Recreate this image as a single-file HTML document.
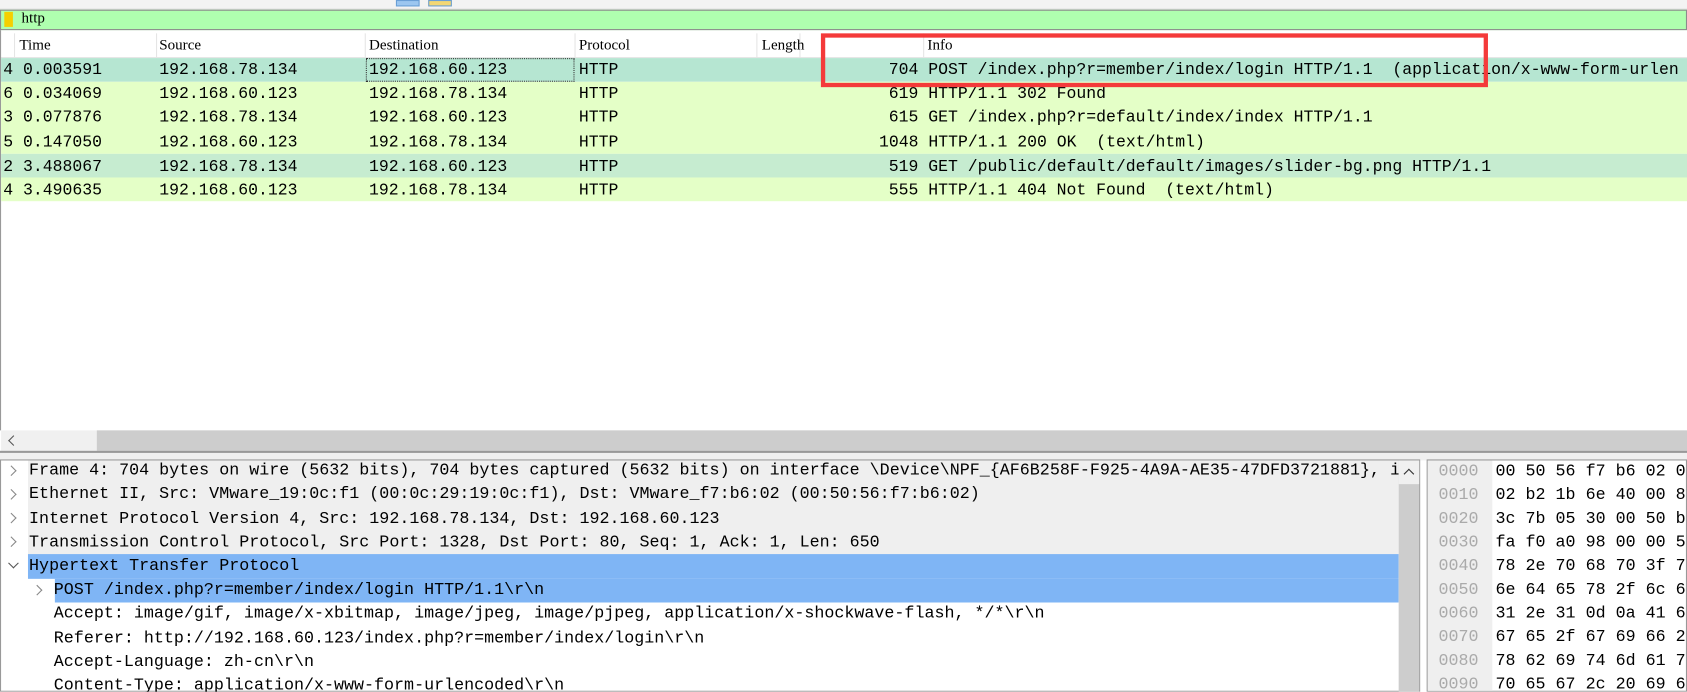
<!DOCTYPE html>
<html><head><meta charset="utf-8"><style>
*{margin:0;padding:0;box-sizing:border-box}
body{width:1687px;height:692px;overflow:hidden;background:#fff;font-family:"Liberation Mono",monospace;font-size:15.3px;color:#000;position:relative}
#w{position:absolute;left:0;top:0;width:1568px;height:643px;transform:scale(1.0759);transform-origin:0 0;overflow:hidden}
.abs{position:absolute}
.t{position:absolute;white-space:pre;line-height:22px}
.b{font-size:15.5px}
.hdr{font-family:"Liberation Serif","Noto Serif CJK SC",serif;font-size:14px}
.chev{position:absolute;width:7px;height:7px;border-right:1.5px solid #888;border-bottom:1.5px solid #888;transform:rotate(-45deg)}
</style></head><body><div id="w">
<div class="abs" style="left:0;top:0;width:1568px;height:9px;background:#f3f3f3;border-bottom:1px solid #ddd"></div>
<div class="abs" style="left:368px;top:0;width:22px;height:6px;background:#9cc6f0;border:1px solid #6a9fd6"></div>
<div class="abs" style="left:398px;top:0;width:22px;height:6px;background:#f2d774;border:1px solid #6a9fd6"></div>
<div class="abs" style="left:0;top:9px;width:1568px;height:19px;background:#afffaf;border:1px solid #8c8c8c"></div>
<div class="abs" style="left:4px;top:11px;width:8px;height:14px;background:#f5cf00"></div>
<div class="t hdr" style="left:20px;top:7px;font-size:14px">http</div>
<div class="abs" style="left:0;top:31px;width:1568px;height:23px;background:#fff;border-bottom:1px solid #e5e5e5"></div>
<div class="abs" style="left:0;top:28px;width:1px;height:372px;background:#999"></div>
<div class="abs" style="left:13px;top:31px;width:1px;height:23px;background:#e5e5e5"></div>
<div class="abs" style="left:145px;top:31px;width:1px;height:23px;background:#e5e5e5"></div>
<div class="abs" style="left:339px;top:31px;width:1px;height:23px;background:#e5e5e5"></div>
<div class="abs" style="left:534px;top:31px;width:1px;height:23px;background:#e5e5e5"></div>
<div class="abs" style="left:703px;top:31px;width:1px;height:23px;background:#e5e5e5"></div>
<div class="abs" style="left:743px;top:31px;width:1px;height:23px;background:#e5e5e5"></div>
<div class="abs" style="left:858px;top:31px;width:1px;height:23px;background:#e5e5e5"></div>
<div class="t hdr" style="left:18px;top:32px">Time</div>
<div class="t hdr" style="left:148px;top:32px">Source</div>
<div class="t hdr" style="left:343px;top:32px">Destination</div>
<div class="t hdr" style="left:538px;top:32px">Protocol</div>
<div class="t hdr" style="left:708px;top:32px">Length</div>
<div class="t hdr" style="left:862px;top:32px">Info</div>
<div class="abs" style="left:1px;top:54px;width:1567px;height:22px;background:#b6e6d2"></div>
<div class="abs" style="left:1px;top:76px;width:1567px;height:67px;background:#e4ffc7"></div>
<div class="abs" style="left:1px;top:143px;width:1567px;height:22px;background:#c6ecd0"></div>
<div class="abs" style="left:1px;top:165px;width:1567px;height:22px;background:#e4ffc7"></div>
<div class="abs" style="left:340px;top:54px;width:194px;height:22px;border:1px dotted #333"></div>
<div class="t" style="left:3px;top:54px">4 0.003591</div><div class="t" style="left:148px;top:54px">192.168.78.134</div><div class="t" style="left:343px;top:54px">192.168.60.123</div><div class="t" style="left:538px;top:54px">HTTP</div><div class="t" style="left:826px;top:54px">704 POST /index.php?r=member/index/login HTTP/1.1  (application/x-www-form-urlen</div>
<div class="t" style="left:3px;top:76px">6 0.034069</div><div class="t" style="left:148px;top:76px">192.168.60.123</div><div class="t" style="left:343px;top:76px">192.168.78.134</div><div class="t" style="left:538px;top:76px">HTTP</div><div class="t" style="left:826px;top:76px">619 HTTP/1.1 302 Found</div>
<div class="t" style="left:3px;top:98px">3 0.077876</div><div class="t" style="left:148px;top:98px">192.168.78.134</div><div class="t" style="left:343px;top:98px">192.168.60.123</div><div class="t" style="left:538px;top:98px">HTTP</div><div class="t" style="left:826px;top:98px">615 GET /index.php?r=default/index/index HTTP/1.1</div>
<div class="t" style="left:3px;top:121px">5 0.147050</div><div class="t" style="left:148px;top:121px">192.168.60.123</div><div class="t" style="left:343px;top:121px">192.168.78.134</div><div class="t" style="left:538px;top:121px">HTTP</div><div class="t" style="left:817px;top:121px">1048 HTTP/1.1 200 OK  (text/html)</div>
<div class="t" style="left:3px;top:144px">2 3.488067</div><div class="t" style="left:148px;top:144px">192.168.78.134</div><div class="t" style="left:343px;top:144px">192.168.60.123</div><div class="t" style="left:538px;top:144px">HTTP</div><div class="t" style="left:826px;top:144px">519 GET /public/default/default/images/slider-bg.png HTTP/1.1</div>
<div class="t" style="left:3px;top:166px">4 3.490635</div><div class="t" style="left:148px;top:166px">192.168.60.123</div><div class="t" style="left:343px;top:166px">192.168.78.134</div><div class="t" style="left:538px;top:166px">HTTP</div><div class="t" style="left:826px;top:166px">555 HTTP/1.1 404 Not Found  (text/html)</div>
<div class="abs" style="left:763px;top:31px;width:620px;height:50px;border:4px solid #f43a3a"></div>
<div class="abs" style="left:1px;top:400px;width:1567px;height:19px;background:#f0f0f0"></div>
<div class="abs" style="left:90px;top:400px;width:1478px;height:19px;background:#cdcdcd"></div>
<div class="chev" style="left:9px;top:406px;transform:rotate(135deg);border-color:#555"></div>
<div class="abs" style="left:0;top:419px;width:1568px;height:2px;background:#999"></div>
<div class="abs" style="left:0;top:421px;width:1568px;height:7px;background:#f0f0f0"></div>
<div class="abs" style="left:0;top:427px;width:1320px;height:216px;border:1px solid #999;background:#fff"></div>
<div class="abs" style="left:26px;top:428px;width:1274px;height:88px;background:#efefef"></div>
<div class="abs" style="left:26px;top:515px;width:1274px;height:23px;background:#7fb5f5"></div>
<div class="abs" style="left:51px;top:538px;width:1249px;height:22px;background:#7fb5f5"></div>
<div class="chev" style="left:7px;top:434px"></div>
<div class="chev" style="left:7px;top:456px"></div>
<div class="chev" style="left:7px;top:478px"></div>
<div class="chev" style="left:7px;top:500px"></div>
<div class="chev" style="left:9px;top:520px;transform:rotate(45deg);border-color:#555"></div>
<div class="chev" style="left:31px;top:545px"></div>
<div class="t b" style="left:27px;top:426px;line-height:22.3px">Frame 4: 704 bytes on wire (5632 bits), 704 bytes captured (5632 bits) on interface \Device\NPF_{AF6B258F-F925-4A9A-AE35-47DFD3721881}, i
Ethernet II, Src: VMware_19:0c:f1 (00:0c:29:19:0c:f1), Dst: VMware_f7:b6:02 (00:50:56:f7:b6:02)
Internet Protocol Version 4, Src: 192.168.78.134, Dst: 192.168.60.123
Transmission Control Protocol, Src Port: 1328, Dst Port: 80, Seq: 1, Ack: 1, Len: 650
Hypertext Transfer Protocol</div>
<div class="abs" style="left:1300px;top:428px;width:19px;height:215px;background:#cdcdcd"></div>
<div class="abs" style="left:1300px;top:428px;width:19px;height:22px;background:#f0f0f0"></div>
<div class="chev" style="left:1306px;top:437px;transform:rotate(-135deg);border-color:#333"></div>
<div class="t b" style="left:50px;top:537px;line-height:22.3px">POST /index.php?r=member/index/login HTTP/1.1\r\n
Accept: image/gif, image/x-xbitmap, image/jpeg, image/pjpeg, application/x-shockwave-flash, */*\r\n
Referer: http://192.168.60.123/index.php?r=member/index/login\r\n
Accept-Language: zh-cn\r\n
Content-Type: application/x-www-form-urlencoded\r\n</div>
<div class="abs" style="left:1326px;top:427px;width:242px;height:216px;border:1px solid #999;background:#fff;overflow:hidden">
<div class="abs" style="left:0;top:0;width:60px;height:215px;background:#efefef"></div>
<div class="t b" style="left:10px;top:-1px;color:#aaa;line-height:22px">0000
0010
0020
0030
0040
0050
0060
0070
0080
0090
00a0</div>
<div class="t b" style="left:63px;top:-1px;line-height:22px">00 50 56 f7 b6 02 0
02 b2 1b 6e 40 00 8
3c 7b 05 30 00 50 b
fa f0 a0 98 00 00 5
78 2e 70 68 70 3f 7
6e 64 65 78 2f 6c 6
31 2e 31 0d 0a 41 6
67 65 2f 67 69 66 2
78 62 69 74 6d 61 7
70 65 67 2c 20 69 6
2c 20 61 70 70 6c 6</div>
</div>
</div></body></html>
